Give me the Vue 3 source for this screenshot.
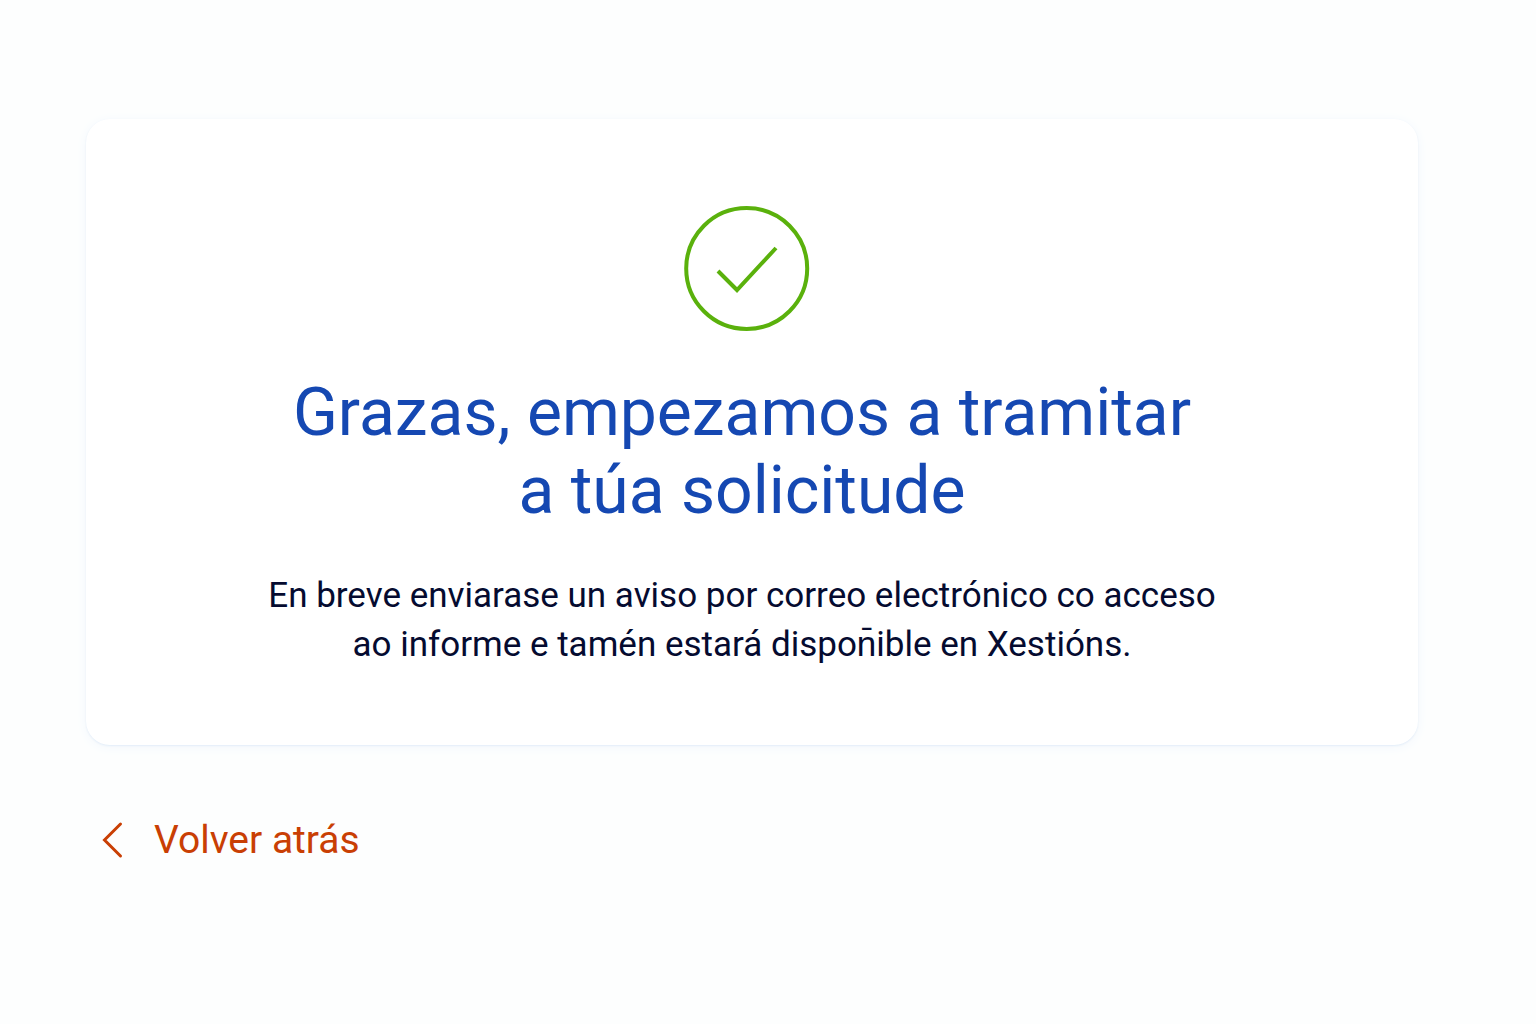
<script setup>
</script>

<template>
  <main class="page">
    <section class="card">
      <svg class="check" viewBox="0 0 126 126" aria-hidden="true">
        <circle cx="62.7" cy="62.5" r="60.5" />
        <path d="M34 65 L53 84 L92 42" />
      </svg>
      <div class="message">
        <h1>Grazas, empezamos a tramitar<br />a túa solicitude</h1>
        <p>En breve enviarase un aviso por correo electrónico co acceso<br />ao informe e tamén estará dispon̄ible en Xestións.</p>
      </div>
    </section>
    <a class="back" href="#">
      <svg class="chevron" viewBox="0 0 20 36" aria-hidden="true"><path d="M18.5 2 L2.5 18 L18.5 34" /></svg>
      <span>Volver atrás</span>
    </a>
  </main>
</template>

<style>
body { background: #fdfefe; }
</style>

<style scoped>
.page {
  box-sizing: border-box;
  min-height: 100vh;
  padding: 119px 118px 64px 86px;
  font-family: Roboto, sans-serif;
}
.card {
  display: flex;
  flex-direction: column;
  align-items: center;
  padding: 87px 42px 76px 32px;
  border-radius: 24px;
  background: #fff;
  box-shadow: 0 1px 2px #e3edf8, 0 2px 12px #f3f8fd;
  text-align: center;
}
.check { width: 126px; height: 126px; fill: none; stroke: #5ab10c; stroke-width: 4; }
.message { padding-right: 10px; }
h1 { margin: 42px 0 0; font-size: 66px; line-height: 78px; font-weight: 400; color: #1548b2; }
p { margin: 41px 0 0; font-size: 35px; line-height: 49px; color: #050b30; }
.back {
  display: inline-flex;
  align-items: center;
  gap: 32px;
  margin: 70px 0 0 16px;
  color: #c93f04;
  font-size: 39px;
  line-height: 50px;
  text-decoration: none;
}
.chevron { width: 20px; height: 36px; overflow: visible; fill: none; stroke: #c93f04; stroke-width: 3; stroke-linecap: round; }
</style>
